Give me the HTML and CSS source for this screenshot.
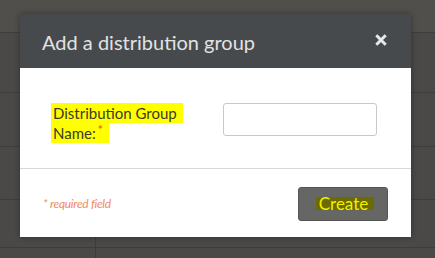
FILE: index.html
```html
<!DOCTYPE html>
<html>
<head>
<meta charset="utf-8">
<link rel="stylesheet" href="styles.css">
</head>
<body>
<div class="page">
  <div class="page-top"></div>
  <div class="row r1"></div>
  <div class="row r2"></div>
  <div class="row r3"></div>
  <div class="row r4"><div class="cell"></div></div>
  <div class="row r5"><div class="cell"></div></div>
</div>
<div class="modal">
  <div class="modal-header">
    <h1 class="modal-title">Add a distribution group</h1>
    <svg class="close" viewBox="0 0 12 12" width="12" height="12">
      <path d="M2.3 0.6 L6 4.3 L9.7 0.6 L11.4 2.3 L7.7 6 L11.4 9.7 L9.7 11.4 L6 7.7 L2.3 11.4 L0.6 9.7 L4.3 6 L0.6 2.3 Z" fill="#ececec" stroke="#ececec" stroke-width="0.6" stroke-linejoin="round"/>
    </svg>
  </div>
  <div class="modal-body">
    <label class="field-label"><span class="hl">Distribution Group Name:<span class="req">*</span></span></label>
    <input class="field-input" type="text">
  </div>
  <div class="modal-footer">
    <span class="required-note">* required field</span>
    <button class="btn-create"><span class="hl-dark">Create</span></button>
  </div>
</div>
</body>
</html>
```
FILE: styles.css
```css
html, body {
  margin: 0;
  padding: 0;
}
body {
  width: 435px;
  height: 258px;
  overflow: hidden;
  background: #4a4947;
  font-family: Lato, "Open Sans", sans-serif;
  position: relative;
}
.page {
  display: flex;
  flex-direction: column;
}
.page-top {
  height: 32px;
  background: #514f4c;
  border-bottom: 1px solid #3f3e3d;
}
.row {
  background: #4a4947;
  border-bottom: 1px solid #3e3d3c;
  display: flex;
}
.r1 { height: 59px; }
.r2 { height: 53px; }
.r3 { height: 52px; }
.r4 { height: 47px; }
.r5 { height: 20px; }
.cell {
  width: 95px;
  border-right: 1px solid #3e3d3c;
}
.modal {
  position: absolute;
  left: 20px;
  top: 14px;
  width: 391px;
  height: 223px;
  background: #fff;
  box-shadow: 0 0 6px rgba(0,0,0,0.35);
  display: flex;
  flex-direction: column;
}
.modal-header {
  height: 54px;
  background: #464a4d;
  display: flex;
  align-items: center;
  justify-content: space-between;
  padding: 0 24px 0 22px;
  box-sizing: border-box;
}
.modal-title {
  margin: 0;
  font-size: 20px;
  font-weight: 400;
  color: #e2e2e2;
  margin-top: 2px;
}
.close {
  display: block;
  margin-top: -2px;
}
.modal-body {
  height: 101px;
  border-bottom: 1px solid #d8d8d8;
  display: flex;
  align-items: flex-start;
  padding: 35px 34px 0 31px;
  box-sizing: border-box;
}
.field-label {
  width: 172px;
  font-size: 15px;
  line-height: 20px;
  color: #3a3a2a;
}
.hl {
  background: #ffff00;
  padding: 1px 6px 1px 2px;
  -webkit-box-decoration-break: clone;
  box-decoration-break: clone;
}
.req {
  color: #ee6a10;
  font-size: 12px;
  font-weight: 700;
  position: relative;
  top: -5px;
  margin-left: 2px;
}
.field-input {
  width: 154px;
  height: 33px;
  box-sizing: border-box;
  border: 1px solid #c8c8c8;
  border-radius: 3px;
  margin: 0;
}
.modal-footer {
  flex: 1;
  display: flex;
  align-items: center;
  justify-content: space-between;
  padding: 0 23px 0 23px;
}
.required-note {
  font-size: 12px;
  font-style: italic;
  color: #f28a5c;
  letter-spacing: -0.3px;
}
.btn-create {
  width: 90px;
  height: 34px;
  background: #666665;
  border: 1px solid #555;
  border-radius: 3px;
  font-family: Lato, "Open Sans", sans-serif;
  font-size: 17px;
  padding: 0;
  margin-top: 1px;
  display: flex;
  align-items: center;
  justify-content: center;
}
.hl-dark {
  background: #6b6b00;
  color: #f0f000;
  padding: 0 6px 0 3px;
  line-height: 13px;
  display: inline-block;
  margin-left: 4px;
}
```
